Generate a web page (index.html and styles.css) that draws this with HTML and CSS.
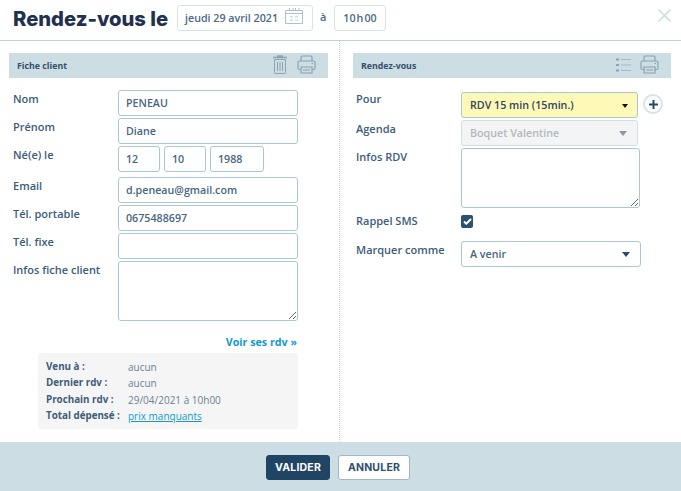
FILE: index.html
```html
<!DOCTYPE html>
<html lang="fr">
<head>
<meta charset="utf-8">
<title>Rendez-vous</title>
<link rel="stylesheet" href="styles.css">
</head>
<body>
<div class="modal">
  <header class="top">
    <h1 class="title">Rendez-vous le</h1>
    <div class="pick pick-date">
      <span>jeudi 29 avril 2021</span>
      <svg class="cal" width="18" height="16" viewBox="0 0 18 16" fill="none" stroke="#a9c3d0"><path d="M.5 2.500h17v13H.5zM.5 5.500h17M4.500 0v3M8 0v3M10.500 0v3M14 0v3"/><path d="M5 8h3v1.500H5zM10 8h3v1.500h-3zM5 11.500h3V13H5zM10 11.500h3V13h-3z" fill="#cfdfe6" stroke="none"/></svg>
    </div>
    <span class="at">à</span>
    <div class="pick pick-time">10<span class="h">h</span>00</div>
    <svg class="close" width="13" height="13" viewBox="0 0 13 13" stroke="#cfdfe6" stroke-width="1.600" fill="none"><path d="M.5.500l12 12M12.500.500l-12 12"/></svg>
  </header>

  <main class="cols">
    <section class="col col-left">
      <div class="bar">
        <span class="bar-title">Fiche client</span>
        <div class="bar-icons">
          <svg width="14" height="19" viewBox="0 0 14 19" fill="none" stroke="#8aa2b1"><path d="M1.500 4.500h11v13.200a.8.8 0 0 1-.8.8H2.300a.8.8 0 0 1-.8-.8z"/><path d="M0 2.500h14M4 1h6" stroke-width="1.500"/><path d="M4.500 7v9M7 7v9M9.500 7v9"/></svg>
          <svg width="19" height="19" viewBox="0 0 19 19" fill="none" stroke="#8aa2b1" stroke-width="1.200"><use href="#printer"/></svg>
        </div>
      </div>
      <div class="form">
        <div class="row"><label class="lbl">Nom</label><div class="box w180">PENEAU</div></div>
        <div class="row"><label class="lbl">Prénom</label><div class="box w180">Diane</div></div>
        <div class="row"><label class="lbl">Né(e) le</label><div class="dob"><div class="box w42">12</div><div class="box w42">10</div><div class="box w54">1988</div></div></div>
        <div class="row row-email"><label class="lbl">Email</label><div class="box w180">d.peneau@gmail.com</div></div>
        <div class="row"><label class="lbl">Tél. portable</label><div class="box w180">0675488697</div></div>
        <div class="row"><label class="lbl">Tél. fixe</label><div class="box w180"></div></div>
        <div class="row"><label class="lbl">Infos fiche client</label><div class="box area w180"><svg class="grip" width="7" height="7" viewBox="0 0 7 7" stroke="#666"><path d="M0 7l7-7M4 7l3-3"/></svg></div></div>
      </div>
      <a class="more">Voir ses rdv »</a>
      <div class="stats">
        <div class="stat"><b>Venu à :</b><span>aucun</span></div>
        <div class="stat"><b>Dernier rdv :</b><span>aucun</span></div>
        <div class="stat"><b>Prochain rdv :</b><span>29/04/2021 à 10h00</span></div>
        <div class="stat"><b>Total dépensé :</b><a>prix manquants</a></div>
      </div>
    </section>

    <section class="col col-right">
      <div class="bar">
        <span class="bar-title">Rendez-vous</span>
        <div class="bar-icons">
          <svg width="15" height="14" viewBox="0 0 15 14" fill="none" stroke="#a3bac7"><path d="M5 1.500h10M5 7h10M5 12.500h10"/><path d="M0 .500h3v2H0zM0 6h3v2H0zM0 11.500h3v2H0z" fill="#8aa2b1" stroke="none"/></svg>
          <svg width="19" height="19" viewBox="0 0 19 19" fill="none" stroke="#8aa2b1" stroke-width="1.200">
            <g id="printer"><path d="M4 6V2.200C4 1.500 4.500 1 5.200 1h8.600c.7 0 1.200.5 1.200 1.200V6"/><path d="M4 14.500H2.500A1.500 1.500 0 0 1 1 13V7.500A1.500 1.500 0 0 1 2.500 6h14A1.500 1.500 0 0 1 18 7.500V13a1.500 1.500 0 0 1-1.500 1.500H15"/><path d="M4 12h11v6H4zM6 15h7"/><path d="M14.500 8.500h1.500"/></g>
          </svg>
        </div>
      </div>
      <div class="form form-right">
        <div class="row">
          <label class="lbl lbl-tight">Pour</label>
          <div class="box sel sel-yellow w177">RDV 15 min (15min.)<i class="caret caret-sm"></i></div>
          <div class="plus"><svg width="9" height="9" viewBox="0 0 9 9" stroke="#234a68" stroke-width="2"><path d="M4.500 0v9M0 4.500h9"/></svg></div>
        </div>
        <div class="row"><label class="lbl">Agenda</label><div class="box sel sel-off w177">Boquet Valentine<i class="caret caret-off"></i></div></div>
        <div class="row"><label class="lbl">Infos RDV</label><div class="box area w179"><svg class="grip" width="7" height="7" viewBox="0 0 7 7" stroke="#666"><path d="M0 7l7-7M4 7l3-3"/></svg></div></div>
        <div class="row row-check"><label class="lbl lbl-tight">Rappel SMS</label><div class="check"><svg width="9" height="7" viewBox="0 0 9 7" fill="none" stroke="#fff" stroke-width="2"><path d="M1 3.500l2.300 2.200L8 1"/></svg></div></div>
        <div class="row row-mark"><label class="lbl">Marquer comme</label><div class="box sel w180">A venir<i class="caret"></i></div></div>
      </div>
    </section>
  </main>

  <footer class="foot">
    <button class="btn btn-main">VALIDER</button>
    <button class="btn btn-alt">ANNULER</button>
  </footer>
</div>
</body>
</html>
```
FILE: styles.css
```css
* { box-sizing: border-box; }
html, body { margin: 0; height: 100%; }
body { background: #fff; color: #3d5c78; font-family: "Open Sans", sans-serif; font-size: 11px; }
.modal { width: 681px; height: 491px; display: flex; flex-direction: column; overflow: hidden; }

.top { height: 41px; flex: none; display: flex; align-items: flex-start; border-bottom: 1px solid #b9d2dd; padding: 5px 0 0 13px; }
.title { margin: 0; font-family: Inter, sans-serif; font-weight: 800; font-size: 20.200px; line-height: 27px; color: #22304f; width: 164px; white-space: nowrap; }
.pick { height: 26px; border: 1px solid #d6e4ea; border-radius: 3px; display: flex; align-items: center; font-size: 10.700px; font-weight: 600; color: #4b6a82; }
.pick-date { width: 136px; padding-left: 7px; gap: 7px; }
.cal { flex: none; margin-top: -4px; }
.at { width: 14px; margin-left: 7px; font-weight: 600; font-size: 11px; line-height: 24px; color: #4b6a82; }
.pick-time { width: 52px; justify-content: center; }
.h { margin: 0 1px; }
.close { margin: 4px 0 0 272px; flex: none; }

.cols { flex: 1; display: flex; min-height: 0; }
.col { width: 340px; padding-top: 12px; }
.col-left { padding-left: 9px; border-right: 1px dotted #c8d5db; }
.col-right { width: 341px; padding-left: 13px; }

.bar { height: 25px; background: #cddde4; display: flex; align-items: center; justify-content: space-between; }
.col-left .bar { width: 319px; padding: 0 12px 0 8px; }
.col-right .bar { width: 318px; padding: 0 12px 0 8px; }
.bar-title { font-size: 8.800px; font-weight: 700; color: #34506b; }
.bar-icons { display: flex; align-items: center; gap: 10px; margin-top: -2px; }
.col-right .bar-icons { gap: 9px; }

.form { padding: 12px 0 0 4px; display: flex; flex-direction: column; gap: 2px; }
.form-right { padding: 14px 0 0 3px; }
.row { display: flex; align-items: flex-start; }
.lbl { width: 105px; flex: none; font-size: 11px; font-weight: 600; color: #3d5c78; line-height: 18px; }
.lbl-tight { line-height: 14px; }
.box { height: 26px; border: 1px solid #a9c7d4; border-radius: 3px; background: #fff; padding: 0 7px; line-height: 24px; font-size: 10.700px; font-weight: 600; color: #48667f; position: relative; white-space: nowrap; }
.w180 { width: 180px; }
.w177 { width: 177px; }
.w179 { width: 179px; }
.w42 { width: 42px; }
.w54 { width: 54px; }
.dob { display: flex; gap: 4px; }
.row-email { margin-top: 3px; }
.area { height: 60px; }
.grip { position: absolute; right: 1px; bottom: 1px; }

.sel { padding-left: 8px; }
.sel-yellow { background: #fff9b8; color: #2e4660; }
.sel-off { background: #f3f4f5; border-color: #d4dfe4; color: #b4b8bc; }
.caret { position: absolute; right: 10px; top: 10px; width: 0; height: 0; border-left: 4.500px solid transparent; border-right: 4.500px solid transparent; border-top: 5px solid #2c4c6a; }
.caret-sm { border-left-width: 3.500px; border-right-width: 3.500px; border-top: 4px solid #111; top: 11px; right: 9px; }
.caret-off { border-top-color: #8f979d; }
.plus { width: 20px; height: 20px; border: 2px solid #d5e4ea; border-radius: 50%; display: flex; align-items: center; justify-content: center; margin: 2px 0 0 5px; }
.row-check { margin-top: 4px; height: 15px; }
.row-mark { margin-top: 10px; }
.check { width: 12px; height: 13px; background: #2b5273; border-radius: 2px; display: flex; align-items: center; justify-content: center; margin-top: 1px; }

.more { display: block; width: 288px; margin-top: 14px; text-align: right; font-size: 10.700px; font-weight: 700; color: #139ac8; line-height: 14px; }
.stats { width: 260px; height: 76px; margin: 4px 0 0 29px; padding: 6px 8px; background: #f5f5f5; border-radius: 3px; }
.stat { display: flex; height: 16.300px; line-height: 16px; font-size: 10px; }
.stat b { width: 82px; font-size: 9.800px; font-weight: 700; color: #3d5c78; flex: none; }
.stat span { color: #6c8192; }
.stat a { color: #139ac8; text-decoration: underline; }

.foot { height: 49px; flex: none; background: #cddde4; display: flex; justify-content: center; align-items: flex-start; gap: 8px; padding: 13px 5px 0 0; }
.btn { height: 25px; border-radius: 3px; font-family: Inter, sans-serif; font-size: 10.500px; font-weight: 700; letter-spacing: .2px; padding: 0; }
.btn-main { width: 64px; background: #1f4464; border: 1px solid #1f4464; color: #fff; }
.btn-alt { width: 72px; background: #fff; border: 1px solid #9db9c8; color: #2f4f6d; }
```
